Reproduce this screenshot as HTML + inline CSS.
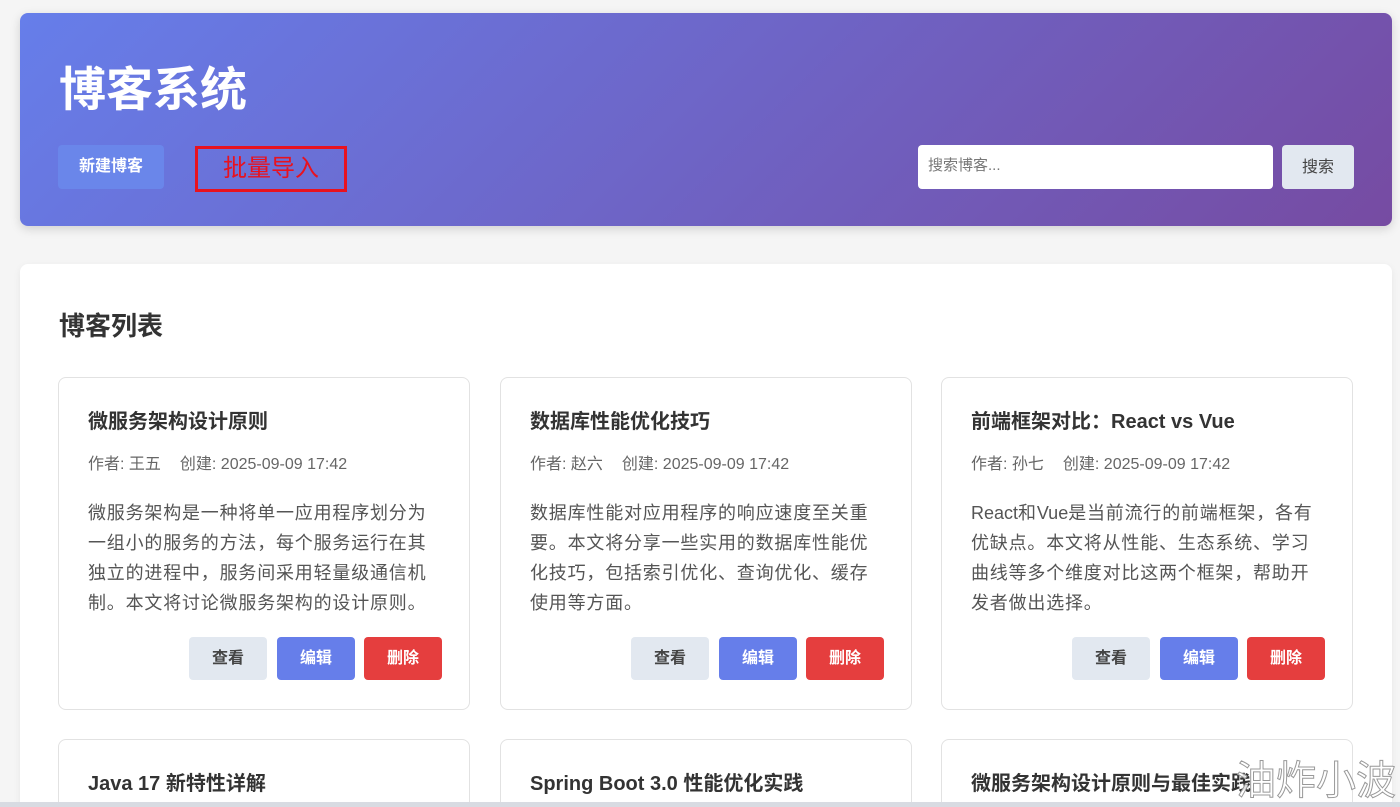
<!DOCTYPE html>
<html><head><meta charset="utf-8"><style>
*{box-sizing:border-box;margin:0;padding:0}
html,body{width:1400px;height:807px;overflow:hidden}
body{background:#f5f5f5;font-family:"Liberation Sans","Noto Sans CJK SC",sans-serif;position:relative}
.hdr{position:absolute;left:20px;top:13px;width:1372px;height:213px;border-radius:8px;background:linear-gradient(135deg,#667eea 0%,#764ba2 100%);box-shadow:0 3px 10px rgba(0,0,0,.15)}
.hdr h1{position:absolute;left:39px;top:48px;font-size:47px;color:#fff;font-weight:bold;line-height:58px}
.new{position:absolute;left:38px;top:132px;width:106px;height:44px;background:#6a86ea;border-radius:4px;color:#fff;font-size:16px;font-weight:bold;line-height:44px;text-align:center}
.imp{position:absolute;left:175px;top:133px;width:152px;height:46px;border:3px solid #e8121f;color:#e8121f;font-size:24px;line-height:40px;text-align:center}
.inp{position:absolute;left:898px;top:132px;width:355px;height:44px;background:#fff;border-radius:4px;color:#777;font-size:15px;line-height:42px;padding-left:10px}
.sb{position:absolute;left:1262px;top:132px;width:72px;height:44px;background:#e2e8f0;border-radius:4px;color:#444;font-size:16px;line-height:46px;text-align:center}
.main{position:absolute;left:20px;top:264px;width:1372px;height:560px;background:#fff;border-radius:8px;box-shadow:0 2px 8px rgba(0,0,0,.06)}
.main h2{position:absolute;left:39px;top:44px;font-size:26px;color:#333;font-weight:bold;line-height:36px}
.card{position:absolute;width:412px;height:333px;border:1px solid #e2e2e2;border-radius:8px;background:#fff}
.card h3{position:absolute;left:29px;top:29px;font-size:20px;color:#333;font-weight:bold;line-height:30px;white-space:nowrap}
.meta{position:absolute;left:29px;top:76px;font-size:16px;color:#666;line-height:22px;white-space:nowrap}
.meta span{margin-left:19px}
.desc{position:absolute;left:29px;top:120px;width:346px;font-size:18px;letter-spacing:0.8px;color:#555;line-height:30px}
.desc i{font-style:normal;letter-spacing:0}
.b{position:absolute;top:259px;width:78px;height:43px;border-radius:4px;font-size:16px;font-weight:bold;line-height:43px;text-align:center}
.v{left:130px;background:#e2e8f0;color:#444}.e{left:218px;background:#667eea;color:#fff}.d{left:305px;background:#e53e3e;color:#fff}
.wm{position:absolute;left:1236px;top:756px;font-size:40px;color:rgba(255,255,255,.85);-webkit-text-stroke:1px #999;line-height:50px}
.bot{position:absolute;left:0;top:802px;width:1400px;height:5px;background:#d8dbe2}
</style></head><body>
<div class="hdr"><h1>博客系统</h1><div class="new">新建博客</div><div class="imp">批量导入</div><div class="inp">搜索博客...</div><div class="sb">搜索</div></div>
<div class="main"><h2>博客列表</h2></div>
<div class="card" style="left:58px;top:377px"><h3>微服务架构设计原则</h3><div class="meta">作者: 王五<span>创建: 2025-09-09 17:42</span></div><div class="desc">微服务架构是一种将单一应用程序划分为一组小的服务的方法，每个服务运行在其独立的进程中，服务间采用轻量级通信机制。本文将讨论微服务架构的设计原则。</div><div class="b v">查看</div><div class="b e">编辑</div><div class="b d">删除</div></div>
<div class="card" style="left:500px;top:377px"><h3>数据库性能优化技巧</h3><div class="meta">作者: 赵六<span>创建: 2025-09-09 17:42</span></div><div class="desc">数据库性能对应用程序的响应速度至关重要。本文将分享一些实用的数据库性能优化技巧，包括索引优化、查询优化、缓存使用等方面。</div><div class="b v">查看</div><div class="b e">编辑</div><div class="b d">删除</div></div>
<div class="card" style="left:941px;top:377px"><h3>前端框架对比：React vs Vue</h3><div class="meta">作者: 孙七<span>创建: 2025-09-09 17:42</span></div><div class="desc"><i>React</i>和<i>Vue</i>是当前流行的前端框架，各有<br>优缺点。本文将从性能、生态系统、学习曲线等多个维度对比这两个框架，帮助开发者做出选择。</div><div class="b v">查看</div><div class="b e">编辑</div><div class="b d">删除</div></div>
<div class="card" style="left:58px;top:739px;height:100px"><h3>Java 17 新特性详解</h3></div>
<div class="card" style="left:500px;top:739px;height:100px"><h3>Spring Boot 3.0 性能优化实践</h3></div>
<div class="card" style="left:941px;top:739px;height:100px"><h3>微服务架构设计原则与最佳实践</h3></div>
<div class="wm">油炸小波</div>
<div class="bot"></div>
</body></html>
